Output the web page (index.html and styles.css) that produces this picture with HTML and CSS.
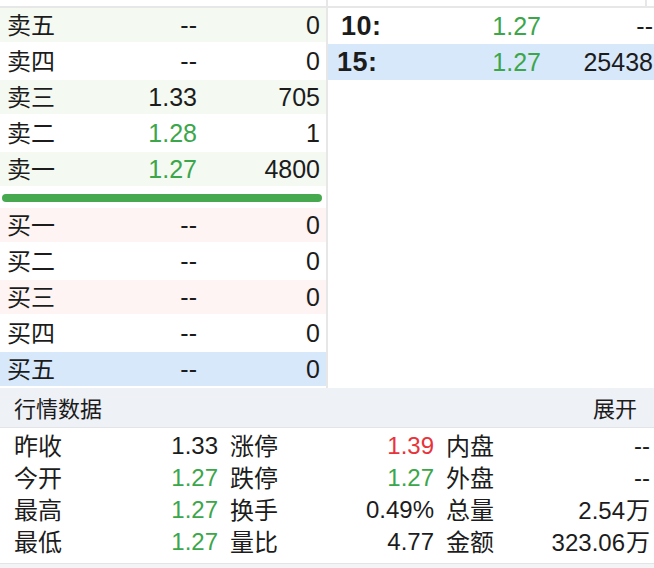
FILE: index.html
```html
<!DOCTYPE html>
<html lang="zh">
<head>
<meta charset="utf-8">
<link rel="stylesheet" href="styles.css">
</head>
<body>
<div class="strip"><div class="strip-l"></div><div class="strip-r"></div></div>
<div class="book">
  <div class="left">
    <div class="rows">
      <div class="row sell"><span class="lab">卖五</span><span class="num">--</span><span class="num">0</span></div>
      <div class="row"><span class="lab">卖四</span><span class="num">--</span><span class="num">0</span></div>
      <div class="row sell"><span class="lab">卖三</span><span class="num">1.33</span><span class="num">705</span></div>
      <div class="row"><span class="lab">卖二</span><span class="num green">1.28</span><span class="num">1</span></div>
      <div class="row sell"><span class="lab">卖一</span><span class="num green">1.27</span><span class="num">4800</span></div>
    </div>
    <div class="bar"></div>
    <div class="rows">
      <div class="row buy"><span class="lab">买一</span><span class="num">--</span><span class="num">0</span></div>
      <div class="row"><span class="lab">买二</span><span class="num">--</span><span class="num">0</span></div>
      <div class="row buy"><span class="lab">买三</span><span class="num">--</span><span class="num">0</span></div>
      <div class="row"><span class="lab">买四</span><span class="num">--</span><span class="num">0</span></div>
      <div class="row sel"><span class="lab">买五</span><span class="num">--</span><span class="num">0</span></div>
    </div>
  </div>
  <div class="right">
    <div class="trow"><span class="tlab first">10:</span><span class="num green">1.27</span><span class="num">--</span></div>
    <div class="trow sel"><span class="tlab">15:</span><span class="num green">1.27</span><span class="num">25438</span></div>
  </div>
</div>
<div class="head"><span class="cjk">行情数据</span><span class="cjk">展开</span></div>
<div class="data">
  <div class="grp"><span class="cjk">昨收</span><span class="num">1.33</span></div>
  <div class="grp"><span class="cjk">涨停</span><span class="num red">1.39</span></div>
  <div class="grp"><span class="cjk">内盘</span><span class="num">--</span></div>
  <div class="grp"><span class="cjk">今开</span><span class="num green">1.27</span></div>
  <div class="grp"><span class="cjk">跌停</span><span class="num green">1.27</span></div>
  <div class="grp"><span class="cjk">外盘</span><span class="num">--</span></div>
  <div class="grp"><span class="cjk">最高</span><span class="num green">1.27</span></div>
  <div class="grp"><span class="cjk">换手</span><span class="num">0.49%</span></div>
  <div class="grp"><span class="cjk">总量</span><span class="num">2.54<span class="wan">万</span></span></div>
  <div class="grp"><span class="cjk">最低</span><span class="num green">1.27</span></div>
  <div class="grp"><span class="cjk">量比</span><span class="num">4.77</span></div>
  <div class="grp"><span class="cjk">金额</span><span class="num">323.06<span class="wan">万</span></span></div>
</div>
<div class="foot"></div>
</body>
</html>
```
FILE: styles.css
```css
* { box-sizing: border-box; }
html, body { margin: 0; padding: 0; background: #ffffff; }
body {
  width: 654px;
  font-family: "Liberation Sans", "Noto Sans CJK SC", sans-serif;
  color: #1c1c1c;
}
.cjk, .lab, .wan { font-family: "Noto Sans CJK SC", sans-serif; }
.strip {
  height: 8px;
  display: flex;
  border-bottom: 2px solid #e7e7e7;
}
.strip-l { width: 328px; border-right: 2px solid #e7e7e7; }
.strip-r { width: 319px; border-right: 2px solid #e7e7e7; }
.book { display: flex; height: 380px; }
.left {
  width: 328px;
  border-right: 2px solid #e7e7e7;
}
.rows { display: flex; flex-direction: column; gap: 2px; }
.row {
  height: 34px;
  display: grid;
  grid-template-columns: 70px 120px 1fr;
  align-items: center;
  padding: 0 6px 0 7px;
  font-size: 25px;
  line-height: 30px;
}
.row.sell { background: #f4f9f2; }
.row.buy { background: #fdf4f3; }
.sel { background: #d8e8fb; }
.lab { font-size: 24px; padding-bottom: 3px; }
.num { text-align: right; }
.green { color: #3ca64a; }
.red { color: #e8333a; }
.bar {
  height: 8px;
  margin: 8px 4px 6px 2px;
  border-radius: 4px;
  background: #47a94f;
}
.right { flex: 1; }
.trow {
  height: 36px;
  display: grid;
  grid-template-columns: 100px 104px 1fr;
  align-items: center;
  padding: 0 1px 0 9px;
  font-size: 25px;
}
.tlab { font-weight: bold; font-size: 27px; letter-spacing: 0.5px; }
.tlab.first { padding-left: 4px; }
.head {
  height: 40px;
  display: flex;
  justify-content: space-between;
  align-items: center;
  padding: 0 17px 2px 14px;
  background: #eef1f5;
  border-bottom: 1px solid #e2e4e8;
  font-size: 22px;
}
.data {
  display: grid;
  grid-template-columns: repeat(3, 1fr);
  column-gap: 12px;
  padding: 2px 4px 5px 14px;
  font-size: 24px;
}
.grp {
  height: 32px;
  display: flex;
  justify-content: space-between;
  align-items: center;
  line-height: 30px;
}
.grp .cjk { padding-bottom: 2px; }
.wan { padding-left: 1px; }
.foot {
  height: 10px;
  border-top: 1px solid #e2e4e8;
  background: #f3f4f6;
}
```
